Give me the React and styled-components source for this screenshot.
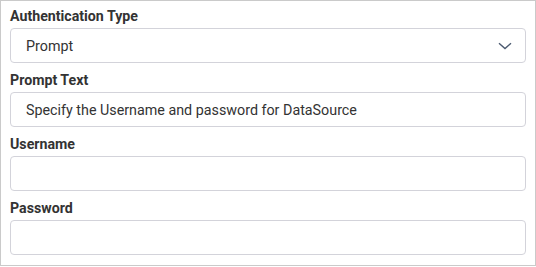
import React from "react";
import styled, { createGlobalStyle } from "styled-components";

const Global = createGlobalStyle`
  body {
    margin: 0;
    background: #fff;
    font-family: Roboto, "Liberation Sans", sans-serif;
  }
`;

const Panel = styled.div`
  box-sizing: border-box;
  width: 536px;
  height: 266px;
  border: 1px solid #cacaca;
  background: #fff;
  padding: 6px 9px 9px;
  display: flex;
  flex-direction: column;
  gap: 8px;
`;

const Field = styled.div`
  display: flex;
  flex-direction: column;
  gap: 3px;
`;

const Label = styled.label`
  font-size: 14.2px;
  line-height: 18px;
  font-weight: 700;
  color: #333;
`;

const Box = styled.div`
  box-sizing: border-box;
  height: 35px;
  border: 1px solid #d3d3da;
  border-radius: 4px;
  display: flex;
  align-items: center;
  padding: 0 13px 0 15px;
  font-size: 14.3px;
  color: #333;
  background: #fff;
  justify-content: space-between;
`;

const Chevron = () => (
  <svg width="14" height="8" viewBox="0 0 14 8">
    <path d="M1 1.2l6 5.3L13 1.2" fill="none" stroke="#4b5a70" strokeWidth="1.4" />
  </svg>
);

const fields = [
  { label: "Authentication Type", value: "Prompt", select: true },
  { label: "Prompt Text", value: "Specify the Username and password for DataSource" },
  { label: "Username", value: "" },
  { label: "Password", value: "" },
];

export default function App() {
  return (
    <>
      <Global />
      <Panel>
        {fields.map((f) => (
          <Field key={f.label}>
            <Label>{f.label}</Label>
            <Box>
              <span>{f.value}</span>
              {f.select && <Chevron />}
            </Box>
          </Field>
        ))}
      </Panel>
    </>
  );
}
